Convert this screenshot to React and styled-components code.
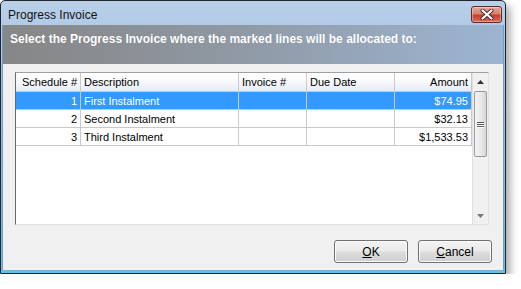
import React from "react";
import styled, { createGlobalStyle } from "styled-components";

const GlobalStyle = createGlobalStyle`
  html, body {
    margin: 0;
    padding: 0;
    background: #ffffff;
  }
  body {
    font-family: "Liberation Sans", Arial, sans-serif;
    font-size: 12px;
    color: #000;
  }
`;

const Window = styled.div`
  box-sizing: border-box;
  width: 506px;
  height: 274px;
  display: flex;
  flex-direction: column;
  border: 1px solid #20262c;
  border-radius: 5px 5px 0 0;
  padding: 0 1px 2px 1px;
  background: linear-gradient(to bottom, #b9d0ea 0%, #a9c3e0 20%, #8fb8dc 70%, #5fc4ea 100%);
  box-shadow: 4px 5px 8px rgba(0, 0, 0, 0.35);
`;

const TitleBar = styled.div`
  flex-shrink: 0;
  height: 24px;
  display: flex;
  align-items: center;
  justify-content: space-between;
  padding: 0 2px 0 6px;
`;

const TitleText = styled.span`
  font-size: 12px;
  color: #111;
  margin-top: 3px;
`;

const CloseButton = styled.div`
  box-sizing: border-box;
  width: 31px;
  height: 17px;
  margin-top: 3px;
  border: 1px solid #5e2a26;
  border-radius: 3px;
  background: linear-gradient(to bottom, #e6a699 0%, #d98170 45%, #c2412c 55%, #d0705d 100%);
  box-shadow: inset 0 0 0 1px rgba(255, 255, 255, 0.35);
  display: flex;
  align-items: center;
  justify-content: center;
`;

const Client = styled.div`
  flex: 1;
  min-height: 0;
  display: flex;
  flex-direction: column;
  background: #f0f0f0;
  border-left: 1px solid #6a9fd0;
  border-right: 1px solid #6a9fd0;
  border-bottom: 1px solid #6ab7e0;
`;

const Banner = styled.div`
  flex-shrink: 0;
  height: 39px;
  box-sizing: border-box;
  padding: 7px 0 0 7px;
  background: linear-gradient(to right, #868686 0%, #8f98a3 45%, #9db5d2 100%);
  color: #ffffff;
  font-weight: bold;
  font-size: 12px;
  text-shadow: 0 0 1px rgba(0, 0, 0, 0.15);
`;

const Body = styled.div`
  flex: 1;
  display: flex;
  flex-direction: column;
  padding: 8px 14px 0 12px;
`;

const ListBox = styled.div`
  flex-shrink: 0;
  height: 153px;
  box-sizing: border-box;
  display: flex;
  background: #ffffff;
  border-top: 1px solid #a0a0a0;
  border-left: 1px solid #6b6b6b;
  border-right: 1px solid #e3e3e3;
  border-bottom: 1px solid #e3e3e3;
`;

const Grid = styled.div`
  flex: 1;
  display: flex;
  flex-direction: column;
`;

const Row = styled.div`
  display: grid;
  grid-template-columns: 65px 158px 68px 88px 77px;
  height: ${(p) => (p.$header ? 19 : 18)}px;
  box-sizing: border-box;
  border-bottom: 1px solid #c9c9c9;
  background: ${(p) =>
    p.$header
      ? "linear-gradient(to bottom, #ffffff 0%, #f7f9fc 50%, #e6ebf3 100%)"
      : p.$selected
      ? "#3399ff"
      : "#ffffff"};
  color: ${(p) => (p.$selected ? "#ffffff" : "#000000")};
`;

const Cell = styled.div`
  box-sizing: border-box;
  border-right: 1px solid #c9c9c9;
  padding: 0 3px;
  display: flex;
  align-items: center;
  justify-content: ${(p) => (p.$right ? "flex-end" : "flex-start")};
  font-size: 11px;
  white-space: nowrap;
  overflow: hidden;
`;

const ScrollBar = styled.div`
  width: 17px;
  display: flex;
  flex-direction: column;
  background: #f0f0f0;
  border-left: 1px solid #e0e0e0;
  box-sizing: border-box;
`;

const ScrollArrow = styled.div`
  height: 17px;
  display: flex;
  align-items: center;
  justify-content: center;
`;

const ScrollTrack = styled.div`
  flex: 1;
  display: flex;
  flex-direction: column;
  padding: 1px 1px 0 1px;
`;

const Thumb = styled.div`
  height: 66px;
  box-sizing: border-box;
  border: 1px solid #9a9a9a;
  border-radius: 2px;
  background: linear-gradient(to right, #f4f4f4 0%, #e9e9e9 50%, #d8d8d8 100%);
  display: flex;
  flex-direction: column;
  align-items: center;
  justify-content: center;
  gap: 1px;
`;

const Grip = styled.span`
  width: 7px;
  height: 1px;
  background: #5a5a5a;
  box-shadow: 0 1px 0 #ffffff;
`;

const Footer = styled.div`
  display: flex;
  justify-content: flex-end;
  gap: 10px;
  margin-top: 15px;
  margin-right: -3px;
`;

const Button = styled.button`
  box-sizing: border-box;
  width: 74px;
  height: 23px;
  border: 1px solid #707070;
  border-radius: 3px;
  background: linear-gradient(to bottom, #f2f2f2 0%, #ebebeb 49%, #dddddd 51%, #cfcfcf 100%);
  box-shadow: inset 0 0 0 1px #fbfbfb;
  font-family: "Liberation Sans", Arial, sans-serif;
  font-size: 12px;
  color: #000;
  padding: 0;
`;

const Accel = styled.span`
  text-decoration: underline;
`;

const columns = [
  { label: "Schedule #", right: true },
  { label: "Description" },
  { label: "Invoice #" },
  { label: "Due Date" },
  { label: "Amount", right: true },
];

const rows = [
  { n: 1, desc: "First Instalment", amount: "$74.95", selected: true },
  { n: 2, desc: "Second Instalment", amount: "$32.13" },
  { n: 3, desc: "Third Instalment", amount: "$1,533.53" },
];

const Triangle = ({ up }) => (
  <svg width="7" height="4" viewBox="0 0 7 4">
    <path d={up ? "M0 4 L3.5 0 L7 4 Z" : "M0 0 L3.5 4 L7 0 Z"} fill={up ? "#333" : "#777"} />
  </svg>
);

export default function App() {
  return (
    <>
      <GlobalStyle />
      <Window>
        <TitleBar>
          <TitleText>Progress Invoice</TitleText>
          <CloseButton>
            <svg width="14" height="11" viewBox="0 0 14 11">
              <path d="M2.5 1.5 L11.5 9.5 M11.5 1.5 L2.5 9.5" stroke="#3c2a2a" strokeWidth="4" strokeLinecap="round" />
              <path d="M2.5 1.5 L11.5 9.5 M11.5 1.5 L2.5 9.5" stroke="#ffffff" strokeWidth="2.2" strokeLinecap="round" />
            </svg>
          </CloseButton>
        </TitleBar>
        <Client>
          <Banner>Select the Progress Invoice where the marked lines will be allocated to:</Banner>
          <Body>
            <ListBox>
              <Grid>
                <Row $header>
                  {columns.map((c) => (
                    <Cell key={c.label} $right={c.right}>
                      {c.label}
                    </Cell>
                  ))}
                </Row>
                {rows.map((r) => (
                  <Row key={r.n} $selected={r.selected}>
                    <Cell $right>{r.n}</Cell>
                    <Cell>{r.desc}</Cell>
                    <Cell />
                    <Cell />
                    <Cell $right>{r.amount}</Cell>
                  </Row>
                ))}
              </Grid>
              <ScrollBar>
                <ScrollArrow>
                  <Triangle up />
                </ScrollArrow>
                <ScrollTrack>
                  <Thumb>
                    <Grip />
                    <Grip />
                    <Grip />
                  </Thumb>
                </ScrollTrack>
                <ScrollArrow>
                  <Triangle />
                </ScrollArrow>
              </ScrollBar>
            </ListBox>
            <Footer>
              <Button>
                <Accel>O</Accel>K
              </Button>
              <Button>
                <Accel>C</Accel>ancel
              </Button>
            </Footer>
          </Body>
        </Client>
      </Window>
    </>
  );
}
